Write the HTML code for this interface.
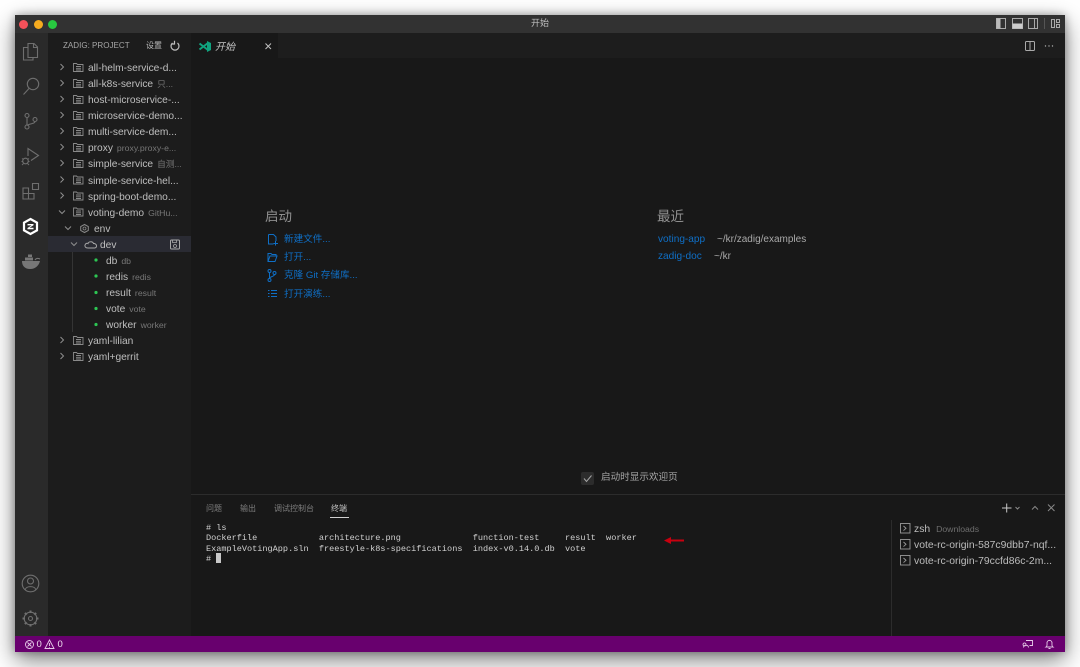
<!DOCTYPE html>
<html><head><meta charset="utf-8">
<style>
html,body{margin:0;padding:0;width:1080px;height:667px;overflow:hidden;background:#fff}
*{box-sizing:border-box}
body{font-family:"Liberation Sans","Noto Sans CJK SC",sans-serif;position:relative}
#win{position:absolute;left:15px;top:15px;width:1050px;height:637px;background:#181818;box-shadow:0 8px 22px rgba(0,0,0,.5),0 0 8px rgba(0,0,0,.3);overflow:hidden}
.a{position:absolute;white-space:nowrap}
svg{position:absolute;overflow:visible;fill:none}
.t{position:absolute;left:88px;font-size:10.2px;line-height:16px;color:#bfbfbf;white-space:nowrap}
.t i{font-style:normal;color:#777;font-size:8.7px;margin-left:4px;line-height:0}
.l{color:#0f6fc6;font-size:9.6px;line-height:14px}
.m{position:absolute;left:206px;font:8.56px/10.3px "Liberation Mono",monospace;color:#d0d0d0;white-space:pre}
.p{font-size:8px;color:#7e7e7e;line-height:12px}
.tm{position:absolute;left:914px;font-size:10.4px;line-height:14px;color:#bcbcbc;white-space:nowrap}
</style></head>
<body>
<div id="win"></div>
<!-- title bar -->
<div class="a" style="left:15px;top:15px;width:1050px;height:18px;background:#323232"></div>
<div class="a" style="left:15px;top:33px;width:33px;height:603px;background:#2a2a2a"></div>
<div class="a" style="left:48px;top:33px;width:143px;height:603px;background:#1c1c1c"></div>
<div class="a" style="left:191px;top:33px;width:874px;height:25px;background:#1d1d1d"></div>
<div class="a" style="left:191px;top:33px;width:87px;height:25px;background:#181818"></div>
<div class="a" style="left:19px;top:19.5px;width:9px;height:9px;border-radius:50%;background:#f4515a"></div>
<div class="a" style="left:33.5px;top:19.5px;width:9px;height:9px;border-radius:50%;background:#f5ab1f"></div>
<div class="a" style="left:48px;top:19.5px;width:9px;height:9px;border-radius:50%;background:#28c840"></div>
<div class="a" style="left:500px;width:80px;text-align:center;top:16px;font-size:9px;line-height:14px;color:#bdbdbd">开始</div>
<!-- title right icons -->
<svg style="left:0;top:0" width="1080" height="60">
<rect x="996.5" y="18.5" width="9" height="10" stroke="#aaa" stroke-width="1"/><rect x="996.5" y="18.5" width="4" height="10" fill="#bbb"/>
<rect x="1012.5" y="18.5" width="10" height="10" stroke="#aaa"/><rect x="1012.5" y="23.5" width="10" height="5" fill="#ccc"/>
<rect x="1028.5" y="18.5" width="9" height="10" stroke="#aaa"/><line x1="1034.5" y1="18.5" x2="1034.5" y2="28.5" stroke="#aaa"/>
<line x1="1044.5" y1="18" x2="1044.5" y2="29" stroke="#555"/>
<rect x="1051.5" y="19.5" width="3" height="8" stroke="#aaa"/><rect x="1056.5" y="19.5" width="3" height="3" stroke="#aaa"/><rect x="1056.5" y="24.5" width="3" height="3" stroke="#aaa"/>
<rect x="1025.5" y="41.5" width="9" height="9" rx="1" stroke="#aaa"/><line x1="1030" y1="41.5" x2="1030" y2="50.5" stroke="#aaa"/>
<circle cx="1045.5" cy="46" r=".7" fill="#aaa"/><circle cx="1049" cy="46" r=".7" fill="#aaa"/><circle cx="1052.5" cy="46" r=".7" fill="#aaa"/>
</svg>
<!-- activity icons -->
<svg style="left:0;top:0" width="60" height="640" stroke="#6f6f6f" stroke-width="1.1">
<path d="M28 43.5h6l3.5 3.5v10.500h-9.500zM33.500 43.500v4h4M28 47.500h-4.500v12.500h9.500v-2.500"/>
<circle cx="33" cy="84" r="5.700"/><path d="M29 88.500l-5.500 6"/>
<circle cx="27" cy="115.500" r="2"/><circle cx="27" cy="127" r="2"/><circle cx="35" cy="119.500" r="2"/><path d="M27 117.500v7.500M35 121.500c0 2.500-6 2-8 4"/>
<path d="M28 156v-7.500l10.500 7-7.500 5"/><circle cx="25.500" cy="161" r="2.800"/><path d="M22 158.500l1.500 1M29 158.500l-1.500 1M21.500 161.500h1.500M28 161.500h1.500M22 165l1.500-1.500M29 165l-1.500-1.500" stroke-width=".9"/>
<path d="M23 188h5.500v5.500h-5.500zM23 193.500h5.500v5.500h-5.500zM28.500 193.500h5.500v5.500h-5.500zM32.500 183.500h6v6h-6z"/>
<circle cx="30.500" cy="583.500" r="8.300"/><circle cx="30.500" cy="581" r="3"/><path d="M25 590c1-4.500 10-4.500 11 0"/>
<circle cx="30.500" cy="618.500" r="2"/><circle cx="30.500" cy="618.500" r="6.300"/><path d="M30.500 610.500v2.500M30.500 624v2.500M22.500 618.500h2.500M36 618.500h2.500M24.900 612.900l1.800 1.800M34.300 622.300l1.800 1.800M24.900 624.100l1.800-1.800M34.300 614.700l1.800-1.800" stroke-width="2"/>
</svg>
<svg style="left:0;top:0" width="60" height="300">
<path d="M30.500 219l6.500 3.700v7.600l-6.500 3.700-6.500-3.700v-7.600z" stroke="#fff" stroke-width="2.200"/>
<path d="M27.500 224h6v1.200l-4 2.600h4v1.400h-6v-1.200l4-2.600h-4z" fill="#fff"/>
<path d="M22 261h18c-1 4-4 8-10 8-5 0-8-3-8-8z" fill="#777"/>
<rect x="25" y="257.500" width="8" height="3" fill="#777"/><rect x="28" y="254.500" width="4" height="2.500" fill="#777"/>
<path d="M35 260c1-2 3-2 5-1" stroke="#777"/>
</svg>
<div class="a" style="left:63px;top:40px;font-size:8.05px;line-height:12px;color:#a5a5a5">ZADIG: PROJECT</div>
<div class="a" style="left:146px;top:40px;font-size:8px;line-height:12px;color:#bcbcbc">设置</div>
<svg style="left:0;top:0" width="190" height="60"><path d="M177.500 43a4 4 0 1 1-5 0M174.500 40.800v3.200h-3" stroke="#c0c0c0" stroke-width="1.200"/></svg>
<!-- selected row -->
<div class="a" style="left:48px;top:236px;width:143px;height:16px;background:#2a2b33"></div>
<!-- tree lines -->
<div class="a" style="left:72px;top:252px;width:1px;height:80px;background:#343434"></div>
<!-- tree icons -->
<svg style="left:0;top:0" width="191" height="370">
<g stroke="#8e8e8e" stroke-width="1">
<path d="M60.500 64l3 3-3 3M60.500 80l3 3-3 3M60.500 96l3 3-3 3M60.500 112l3 3-3 3M60.500 128l3 3-3 3M60.500 144l3 3-3 3M60.500 160l3 3-3 3M60.500 176.500l3 3-3 3M60.500 192.500l3 3-3 3M60.500 337l3 3-3 3M60.500 353l3 3-3 3"/>
<path d="M59 210.500l3 3 3-3M65 226.500l3 3 3-3M71 242.500l3 3 3-3"/>
</g>
<g stroke="#8a8a8a" stroke-width=".9">
<path d="M73.500 63.500h3l1 1h5.500v7h-9.500zM76 66.500h5M76 68.300h5M76 70h5"/>
<path d="M73.500 79.500h3l1 1h5.500v7h-9.500zM76 82.500h5M76 84.300h5M76 86h5"/>
<path d="M73.500 95.500h3l1 1h5.500v7h-9.500zM76 98.500h5M76 100.300h5M76 102h5"/>
<path d="M73.500 111.500h3l1 1h5.500v7h-9.500zM76 114.500h5M76 116.300h5M76 118h5"/>
<path d="M73.500 127.500h3l1 1h5.500v7h-9.500zM76 130.500h5M76 132.300h5M76 134h5"/>
<path d="M73.500 143.500h3l1 1h5.500v7h-9.500zM76 146.500h5M76 148.300h5M76 150h5"/>
<path d="M73.500 159.500h3l1 1h5.500v7h-9.500zM76 162.500h5M76 164.300h5M76 166h5"/>
<path d="M73.500 176h3l1 1h5.500v7h-9.500zM76 179h5M76 180.800h5M76 182.500h5"/>
<path d="M73.500 192h3l1 1h5.500v7h-9.500zM76 195h5M76 196.800h5M76 198.500h5"/>
<path d="M73.500 208h3l1 1h5.500v7h-9.500zM76 211h5M76 212.800h5M76 214.500h5"/>
<path d="M73.500 336.500h3l1 1h5.500v7h-9.500zM76 339.500h5M76 341.300h5M76 343h5"/>
<path d="M73.500 352.500h3l1 1h5.500v7h-9.500zM76 355.500h5M76 357.300h5M76 359h5"/>
</g>
<path d="M84.500 224.500l3.800 2v4l-3.800 2-3.800-2v-4z" stroke="#8a8a8a"/><circle cx="84.500" cy="228.500" r="1.500" stroke="#8a8a8a" stroke-width=".8"/>
<path d="M88 248c-2.500 0-3.500-1.500-3-3 .5-1.800 2.500-2 3-1.500.5-2 4.500-2.500 5.500 0 1-.2 3 .5 3 2.300 0 1.500-1 2.200-2 2.200z" stroke="#a8a8a8"/>
<rect x="170.500" y="240" width="9" height="9" rx="1" stroke="#a8a8a8"/><circle cx="175" cy="246" r="1.500" stroke="#a8a8a8" stroke-width=".8"/><path d="M172.500 240v2.500h4V240" stroke="#a8a8a8" stroke-width=".8"/>
<g fill="#2dc653"><circle cx="96" cy="260" r="1.600"/><circle cx="96" cy="276" r="1.600"/><circle cx="96" cy="292.500" r="1.600"/><circle cx="96" cy="308.500" r="1.600"/><circle cx="96" cy="324.500" r="1.600"/></g>
</svg>
<!-- tree text -->
<div class="t" style="top:61px">all-helm-service-d...</div>
<div class="t" style="top:77px">all-k8s-service<i>只...</i></div>
<div class="t" style="top:93px">host-microservice-...</div>
<div class="t" style="top:109px">microservice-demo...</div>
<div class="t" style="top:125px">multi-service-dem...</div>
<div class="t" style="top:141px">proxy<i>proxy.proxy-e...</i></div>
<div class="t" style="top:157px">simple-service<i>自测...</i></div>
<div class="t" style="top:174px">simple-service-hel...</div>
<div class="t" style="top:190px">spring-boot-demo...</div>
<div class="t" style="top:206px">voting-demo<i>GitHu...</i></div>
<div class="t" style="top:222px;left:94px">env</div>
<div class="t" style="top:238px;left:100px">dev</div>
<div class="t" style="top:254px;left:106px">db<i>db</i></div>
<div class="t" style="top:270px;left:106px">redis<i>redis</i></div>
<div class="t" style="top:286px;left:106px">result<i>result</i></div>
<div class="t" style="top:302px;left:106px">vote<i>vote</i></div>
<div class="t" style="top:318px;left:106px">worker<i>worker</i></div>
<div class="t" style="top:334px">yaml-lilian</div>
<div class="t" style="top:350px">yaml+gerrit</div>
<!-- tab -->
<svg style="left:0;top:0" width="280" height="60">
<path d="M199.500 43.500l8.500 6.500M199.500 49.500l8.500-6.500" stroke="#10a37f" stroke-width="2"/>
<path d="M207 41l4 2v7l-4 2z" fill="#10a37f"/>
<path d="M265.500 43.500l5.500 5.500M271 43.500l-5.500 5.500" stroke="#c0c0c0"/>
</svg>
<div class="a" style="left:215px;top:41px;font-size:10px;line-height:14px;color:#c8c8c8;font-style:italic">开始</div>
<!-- welcome -->
<div class="a" style="left:265px;top:208px;font-size:13.500px;line-height:18px;color:#8f8f8f">启动</div>
<div class="a" style="left:657px;top:208px;font-size:13.500px;line-height:18px;color:#8f8f8f">最近</div>
<div class="a l" style="left:284px;top:233px">新建文件...</div>
<div class="a l" style="left:284px;top:251px">打开...</div>
<div class="a l" style="left:284px;top:269px">克隆 Git 存储库...</div>
<div class="a l" style="left:284px;top:288px">打开演练...</div>
<svg style="left:0;top:0" width="300" height="310" stroke="#0f6fc6">
<path d="M268.500 234.500h5l2.500 2.500v4M268.500 234.500v9.500h5M275.500 241v4.500M273.500 243.500h4.500"/>
<path d="M268 253.500h3l1 1h4v1.500h-6l-2 5.500zM268 253.500v8h7l2-5.500h-1.500"/>
<circle cx="269.500" cy="271" r="1.500"/><circle cx="269.500" cy="280" r="1.500"/><circle cx="274.500" cy="273" r="1.500"/><path d="M269.500 272.500v6M274.500 274.500c0 2-4 2-5 3.500"/>
<path d="M268 290.500h1.500M268 293.500h1.500M268 296.500h1.500M271 290.500h6M271 293.500h6M271 296.500h6"/>
</svg>
<div class="a" style="left:658px;top:232.500px;font-size:10.1px;line-height:14px;color:#0f6fc6">voting-app</div>
<div class="a" style="left:717px;top:232.500px;font-size:10px;line-height:14px;color:#a9a9a9">~/kr/zadig/examples</div>
<div class="a" style="left:658px;top:249.500px;font-size:10.1px;line-height:14px;color:#0f6fc6">zadig-doc</div>
<div class="a" style="left:714px;top:249.500px;font-size:10px;line-height:14px;color:#a9a9a9">~/kr</div>
<!-- checkbox -->
<div class="a" style="left:581px;top:472px;width:13px;height:13px;border-radius:2px;background:#2c2c2c"></div>
<svg style="left:0;top:0" width="600" height="490"><path d="M584 478.500l2.500 3 5-6" stroke="#a5a5a5"/></svg>
<div class="a" style="left:601px;top:471px;font-size:9.600px;line-height:14px;color:#a5a5a5">启动时显示欢迎页</div>
<!-- panel -->
<div class="a" style="left:191px;top:494px;width:874px;height:1px;background:#2c2c2c"></div>
<div class="a p" style="left:206px;top:503px">问题</div>
<div class="a p" style="left:240px;top:503px">输出</div>
<div class="a p" style="left:274px;top:503px">调试控制台</div>
<div class="a p" style="left:331px;top:503px;color:#c5c5c5">终端</div>
<div class="a" style="left:329.500px;top:517px;width:19px;height:1px;background:#d0d0d0"></div>
<svg style="left:0;top:0" width="1080" height="530" stroke="#a0a0a0">
<path d="M1002 508h9.500M1006.700 503.500v9" stroke="#c8c8c8"/>
<path d="M1015.500 507l2 2 2-2M1032 509.500l3-3 3 3M1048 504.500l6.500 6.500M1054.500 504.500l-6.500 6.500" stroke="#8a8a8a"/>
</svg>
<!-- terminal -->
<div class="m" style="top:523px"># ls</div>
<div class="m" style="top:533px">Dockerfile            architecture.png              function-test     result  worker</div>
<div class="m" style="top:543.500px">ExampleVotingApp.sln  freestyle-k8s-specifications  index-v0.14.0.db  vote</div>
<div class="m" style="top:554px"># </div>
<div class="a" style="left:216px;top:553px;width:5px;height:10px;background:#c8c8c8"></div>
<svg style="left:0;top:0" width="700" height="560"><path d="M664 540.500l7-3.500v2.500h13v2h-13v2.500z" fill="#c8000f"/></svg>
<!-- terminal list -->
<div class="a" style="left:891px;top:520px;width:1px;height:116px;background:#2c2c2c"></div>
<svg style="left:0;top:0" width="920" height="570" stroke="#9a9a9a" stroke-width=".9">
<rect x="900.500" y="523.500" width="9.500" height="9.500"/><path d="M903.500 526l2.500 2.300-2.500 2.300"/>
<rect x="900.500" y="539.500" width="9.500" height="9.500"/><path d="M903.500 542l2.500 2.300-2.500 2.300"/>
<rect x="900.500" y="555.500" width="9.500" height="9.500"/><path d="M903.500 558l2.500 2.300-2.500 2.300"/>
</svg>
<div class="tm" style="top:522.500px">zsh <span style="color:#6e6e6e;font-size:8.700px;margin-left:3px;line-height:0">Downloads</span></div>
<div class="tm" style="top:538.500px">vote-rc-origin-587c9dbb7-nqf...</div>
<div class="tm" style="top:554.500px">vote-rc-origin-79ccfd86c-2m...</div>
<!-- status bar -->
<div class="a" style="left:15px;top:636px;width:1050px;height:16px;background:#68006e"></div>
<svg style="left:0;top:0" width="1080" height="660" stroke="#e6cbe8" stroke-width=".9">
<circle cx="29.500" cy="644.500" r="4"/><path d="M27.500 642.500l4 4M31.500 642.500l-4 4"/>
<path d="M49.500 640l4.500 8.500h-9zM49.500 643v3M49.500 647v.6"/>
<path d="M1026 640.500h6.500v5h-3M1023.500 647.500c0-3 5-3 5 0M1026 644.500a1.500 1.500 0 1 1 0-.1"/>
<path d="M1046 647c1.500-1 1-2.500 1-4 0-3.500 5-3.500 5 0 0 1.500-.5 3 1 4zM1048.500 648.500h2"/>
</svg>
<div class="a" style="left:36.500px;top:638px;font-size:9.500px;line-height:13px;color:#f0e3f1">0</div>
<div class="a" style="left:57.500px;top:638px;font-size:9.500px;line-height:13px;color:#f0e3f1">0</div>
</body></html>
